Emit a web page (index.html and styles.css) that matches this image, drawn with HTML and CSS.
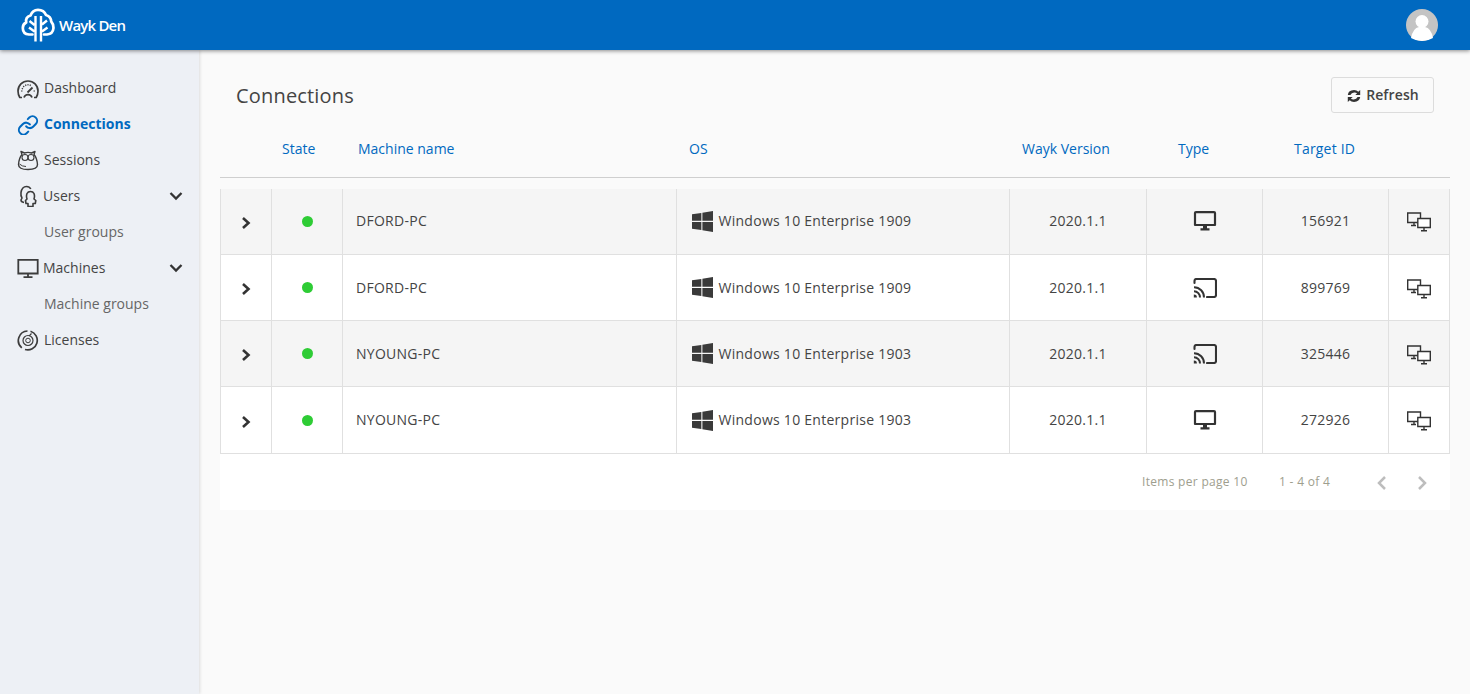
FILE: index.html
```html
<!DOCTYPE html>
<html lang="en">
<head>
<meta charset="utf-8">
<title>Wayk Den</title>
<link rel="stylesheet" href="styles.css">
</head>
<body>
<svg class="defs" width="0" height="0" aria-hidden="true">
  <defs>
    <symbol id="i-win" viewBox="0 0 20 20"><path d="M0 3.1 8.9 1.8V9.4H0ZM9.900 1.600 20 0V9.400H9.900ZM0 10.400H8.900V18.200L0 16.900ZM9.900 10.400H20V20L9.900 18.400Z"/></symbol>
    <symbol id="i-mon" viewBox="0 0 24 22"><path fill="none" stroke="currentColor" stroke-width="2.200" d="M3 2.100H21Q22 2.100 22 3.100V15H2V3.100Q2 2.100 3 2.100Z" stroke-linejoin="round"/><path d="M10 16H14V18.200H16.500V20.500H7.500V18.200H10Z"/></symbol>
    <symbol id="i-cast" viewBox="0 0 24 20"><path fill="none" stroke="currentColor" stroke-width="2.100" stroke-linecap="round" d="M1.500 5V3Q1.500 1 3.500 1H21Q23 1 23 3V17Q23 19 21 19H14"/><path fill="none" stroke="currentColor" stroke-width="2" d="M1 9.200A10 10 0 0 1 11 19.500M1 13.300A6 6 0 0 1 7 19.500"/><path d="M.8 16.400A3 3 0 0 1 3.900 19.500H.8Z"/></symbol>
    <symbol id="i-rc" viewBox="0 0 24 20"><g fill="none" stroke="currentColor" stroke-width="1.400"><path d="M.7 1H13.500V10.500H.7ZM7 10.500V13.500M4 13.500H9"/><path class="rc-front" d="M10.800 6.500H23.300V15.500H10.800ZM17 15.500V18.800M14 18.800H20"/></g></symbol>
    <symbol id="i-chev" viewBox="0 0 10 14"><path fill="none" stroke="currentColor" stroke-width="2.600" d="M2 3 7.500 8 2 13"/></symbol>
  </defs>
</svg>

<header class="topbar">
  <div class="brand">
    <svg class="logo" viewBox="0 0 34 34" aria-hidden="true">
      <path fill="none" stroke="#fff" stroke-width="2.700" stroke-linejoin="round" stroke-linecap="round" d="M11.500 26.500H8Q1.800 26 1.800 20Q1.800 16 5.200 14.500Q4.200 9 9.500 7.500Q11.500 1.800 17 1.800Q23 1.800 25 7Q30 8.500 30.200 13.500Q32.500 16 32.500 20Q32 26 26 26.500H23"/>
      <path fill="none" stroke="#fff" stroke-width="2.400" d="M14.500 8V33.500M20 8V33.500M8.500 13 13.500 17M8 19.500 13.500 23.500M26 12.500 21 16.500M26.500 19.500 21 23.500"/>
    </svg>
    <span class="brand-name">Wayk Den</span>
  </div>
  <div class="avatar">
    <svg viewBox="0 0 32 32" width="32" height="32" aria-hidden="true">
      <circle cx="16" cy="16" r="16" fill="#c4c4c4"/>
      <circle cx="16" cy="12.500" r="6.500" fill="#fff"/>
      <path d="M5 29Q7 19 13 18H19Q25 19 27 29Q22 32 16 32Q10 32 5 29Z" fill="#fff"/>
    </svg>
  </div>
</header>

<div class="shell">
  <nav class="sidebar">
    <a class="nav-item"><svg class="nav-icon" viewBox="0 0 22 22" aria-hidden="true"><g fill="none" stroke="#3c3c3c" stroke-width="1.700"><path d="M5 20.500H2.800Q1 17.500 1 14A10 10 0 0 1 21 14Q21 17.500 19.200 20.500H17M7 20.500A4.200 4.200 0 0 1 15 20.500"/><path d="M10.500 15.500 15.500 10.500" stroke-width="1.800"/><path d="M4 14H5.500M16.500 14H18M11 7V8.500M6.200 9 7.200 10M8.500 7.500 9 9M13.500 7.500 13 9M4.800 11.300 6 12" stroke-width="1.100"/></g></svg><span>Dashboard</span></a>
    <a class="nav-item active"><svg class="nav-icon" viewBox="0 -1.500 24 24" aria-hidden="true"><g fill="none" stroke="#0069c0" stroke-width="2.200" stroke-linecap="round"><path d="M10 13a5 5 0 0 0 7.540.54l3-3a5 5 0 0 0-7.070-7.070l-1.720 1.710"/><path d="M14 11a5 5 0 0 0-7.540-.54l-3 3a5 5 0 0 0 7.070 7.070l1.710-1.710"/></g></svg><span>Connections</span></a>
    <a class="nav-item"><svg class="nav-icon" viewBox="0 0 22 22" aria-hidden="true"><g fill="none" stroke="#3c3c3c" stroke-width="1.400" stroke-linejoin="round"><path d="M5 5.500 4 2.500 7.500 4Q11 2.800 14.500 4L18 2.500 17 5.500Q20 9 20.500 15.500Q20.500 20.500 11 20.500T1.500 15.500Q2 9 5 5.500Z"/><circle cx="8" cy="8.500" r="3" stroke-width="1.100"/><circle cx="14" cy="8.500" r="3" stroke-width="1.100"/><path d="M2.500 15Q5 17.500 9 17.500" stroke-width="1"/></g></svg><span>Sessions</span></a>
    <a class="nav-item group tight"><svg class="nav-icon" viewBox="0 0 22 22" aria-hidden="true"><g fill="none" stroke="#3c3c3c" stroke-width="1.600" stroke-linejoin="round"><path d="M7 17.500Q4 17 4 15L5 13Q3.500 11 4 7.500Q5 1.500 9.500 1.500Q12.500 1.500 13.800 4"/><path d="M11 21.500V18.500H9L8.500 15.500 10 14Q9 11 10 8.500Q11 6.500 13.500 6.500T17 8.500Q18 11 17 14L18.800 15.500 18.300 18.500H16V21.500Z"/></g></svg><span>Users</span><svg class="nav-chev" viewBox="0 0 14 10" aria-hidden="true"><path fill="none" stroke="#333" stroke-width="2.300" d="M1.500 2 7 7.500 12.500 2"/></svg></a>
    <a class="nav-item sub"><span>User groups</span></a>
    <a class="nav-item group tight"><svg class="nav-icon" viewBox="0 0 22 22" aria-hidden="true"><path fill="none" stroke="#3c3c3c" stroke-width="1.800" d="M1.300 2.900H20.700V16.500H1.300ZM11 16.500V20.200M6.500 20.200H15.500"/></svg><span>Machines</span><svg class="nav-chev" viewBox="0 0 14 10" aria-hidden="true"><path fill="none" stroke="#333" stroke-width="2.300" d="M1.500 2 7 7.500 12.500 2"/></svg></a>
    <a class="nav-item sub"><span>Machine groups</span></a>
    <a class="nav-item"><svg class="nav-icon" viewBox="0 0 22 22" aria-hidden="true"><g fill="none" stroke="#3c3c3c"><path stroke-width="1.700" d="M13.500 2.300A9.500 9.500 0 0 1 8 20.500M4.800 18.800A9.500 9.500 0 0 1 10.500 2"/><path stroke-width="1.200" d="M14.500 4.500 12 7.200"/><circle cx="11" cy="11.500" r="5" stroke-width="1.200"/><circle cx="11" cy="11.500" r="2.300" stroke-width="1"/></g></svg><span>Licenses</span></a>
  </nav>

  <main class="content">
    <div class="title-row">
      <h1 class="title">Connections</h1>
      <button class="refresh" type="button">
        <svg class="refresh-icon" viewBox="0 0 14 14" aria-hidden="true"><path fill="#333" d="M.8 6Q1.400 1.300 7 1.100Q9.800 1.100 11.300 2.800L13.200 1V6H8.300L10.100 4.300Q9 3.400 7.200 3.500Q4.500 3.600 3.400 6ZM13.200 8Q12.600 12.700 7 12.900Q4.200 12.900 2.700 11.200L.8 13V8H5.700L3.900 9.700Q5 10.600 6.800 10.500Q9.500 10.400 10.600 8Z"/></svg>
        <span>Refresh</span>
      </button>
    </div>

    <div class="grid-row head">
      <div></div>
      <div class="h-state">State</div>
      <div class="h-name">Machine name</div>
      <div class="h-os">OS</div>
      <div class="h-ver">Wayk Version</div>
      <div class="h-type">Type</div>
      <div class="h-id">Target ID</div>
      <div></div>
    </div>

    <div class="table">
      <div class="grid-row row odd">
        <div class="cell center"><svg class="chev" aria-hidden="true"><use href="#i-chev"/></svg></div>
        <div class="cell center"><span class="dot"></span></div>
        <div class="cell">DFORD-PC</div>
        <div class="cell os"><svg class="win" aria-hidden="true"><use href="#i-win"/></svg>Windows 10 Enterprise 1909</div>
        <div class="cell center">2020.1.1</div>
        <div class="cell center"><svg class="type-mon" aria-hidden="true"><use href="#i-mon"/></svg></div>
        <div class="cell center">156921</div>
        <div class="cell center"><svg class="rc" aria-hidden="true"><use href="#i-rc"/></svg></div>
      </div>
      <div class="grid-row row">
        <div class="cell center"><svg class="chev" aria-hidden="true"><use href="#i-chev"/></svg></div>
        <div class="cell center"><span class="dot"></span></div>
        <div class="cell">DFORD-PC</div>
        <div class="cell os"><svg class="win" aria-hidden="true"><use href="#i-win"/></svg>Windows 10 Enterprise 1909</div>
        <div class="cell center">2020.1.1</div>
        <div class="cell center"><svg class="type-cast" aria-hidden="true"><use href="#i-cast"/></svg></div>
        <div class="cell center">899769</div>
        <div class="cell center"><svg class="rc" aria-hidden="true"><use href="#i-rc"/></svg></div>
      </div>
      <div class="grid-row row odd">
        <div class="cell center"><svg class="chev" aria-hidden="true"><use href="#i-chev"/></svg></div>
        <div class="cell center"><span class="dot"></span></div>
        <div class="cell">NYOUNG-PC</div>
        <div class="cell os"><svg class="win" aria-hidden="true"><use href="#i-win"/></svg>Windows 10 Enterprise 1903</div>
        <div class="cell center">2020.1.1</div>
        <div class="cell center"><svg class="type-cast" aria-hidden="true"><use href="#i-cast"/></svg></div>
        <div class="cell center">325446</div>
        <div class="cell center"><svg class="rc" aria-hidden="true"><use href="#i-rc"/></svg></div>
      </div>
      <div class="grid-row row">
        <div class="cell center"><svg class="chev" aria-hidden="true"><use href="#i-chev"/></svg></div>
        <div class="cell center"><span class="dot"></span></div>
        <div class="cell">NYOUNG-PC</div>
        <div class="cell os"><svg class="win" aria-hidden="true"><use href="#i-win"/></svg>Windows 10 Enterprise 1903</div>
        <div class="cell center">2020.1.1</div>
        <div class="cell center"><svg class="type-mon" aria-hidden="true"><use href="#i-mon"/></svg></div>
        <div class="cell center">272926</div>
        <div class="cell center"><svg class="rc" aria-hidden="true"><use href="#i-rc"/></svg></div>
      </div>
    </div>

    <div class="pager">
      <span class="per-page">Items per page 10</span>
      <span class="range">1 - 4 of 4</span>
      <svg class="pg" viewBox="0 0 14 18" aria-hidden="true"><path fill="none" stroke="#bdbdbd" stroke-width="2.500" d="M10 3 4 9 10 15"/></svg>
      <svg class="pg next" viewBox="0 0 14 18" aria-hidden="true"><path fill="none" stroke="#bdbdbd" stroke-width="2.500" d="M4 3 10 9 4 15"/></svg>
    </div>
  </main>
</div>
</body>
</html>
```

FILE: styles.css
```css
* { box-sizing: border-box; }
html, body { height: 100%; }
body {
  margin: 0;
  font-family: "Open Sans", "Liberation Sans", sans-serif;
  font-size: 14px;
  line-height: 20px;
  color: #444;
  background: #fafafa;
  overflow: hidden;
}
.defs { display: block; height: 0; }

.topbar {
  position: relative;
  z-index: 3;
  height: 50px;
  background: #0069c0;
  box-shadow: 0 1px 4px rgba(0, 0, 0, .45);
  display: flex;
  align-items: center;
  justify-content: space-between;
  padding: 0 32px 0 21px;
}
.brand { display: flex; align-items: center; gap: 4px; }
.logo { display: block; width: 34px; height: 34px; }
.brand-name { color: #fff; font-size: 15px; font-weight: 600; letter-spacing: -.8px; }
.avatar { display: flex; }

.shell { display: flex; height: 644px; }
.sidebar {
  position: relative;
  z-index: 2;
  width: 199px;
  flex: none;
  background: #edf0f5;
  box-shadow: 1px 0 3px rgba(0, 0, 0, .12);
  padding: 20px 0 0 17px;
  color: #444;
}
.nav-item {
  display: flex;
  align-items: center;
  height: 36px;
  gap: 5px;
}
.nav-item.tight { gap: 4px; }
.nav-icon { width: 22px; height: 22px; flex: none; }
.nav-item.active { color: #0069c0; font-weight: 700; }
.nav-item.sub { padding-left: 27px; color: #666; }
.nav-chev { width: 14px; height: 10px; margin-left: auto; margin-right: 16px; }

.content { flex: 1; padding: 27px 20px 0 21px; min-width: 0; }
.title-row {
  display: flex;
  align-items: center;
  justify-content: space-between;
  height: 36px;
  padding: 0 16px;
}
.title {
  margin: 0;
  padding-top: 2px;
  font-size: 20px;
  line-height: 36px;
  font-weight: 400;
  letter-spacing: .18px;
  color: #444;
}
.refresh {
  width: 103px;
  height: 36px;
  display: flex;
  align-items: center;
  justify-content: center;
  gap: 5px;
  background: #fafafa;
  border: 1px solid #dcdcdc;
  border-radius: 3px;
  font: 600 14px/20px "Open Sans", "Liberation Sans", sans-serif;
  letter-spacing: .12px;
  color: #444;
  padding: 0 0 0 1px;
}
.refresh-icon { width: 14px; height: 14px; margin-top: 2px; }

.grid-row {
  display: grid;
  grid-template-columns: 51px 71px 334px 333px 137px 116px 126px 62px;
}
.head {
  margin-top: 18px;
  height: 47px;
  padding-top: 8px;
  border-bottom: 1px solid #cfcfcf;
  color: #0069c0;
}
.h-state { padding-left: 11px; }
.h-name { padding-left: 16px; }
.h-os, .h-ver { padding-left: 13px; }
.h-type, .h-id { padding-left: 32px; }
.h-id { letter-spacing: .2px; }

.table { margin-top: 10.5px; border-left: 1px solid #e0e0e0; }
.row {
  grid-template-columns: 51px 71px 334px 333px 137px 116px 126px 61px;
  height: 66.25px;
  background: #fff;
  border-bottom: 1px solid #e0e0e0;
}
.row.odd { background: #f5f5f5; }
.cell {
  display: flex;
  align-items: center;
  padding: .4px 0 0 13px;
  border-right: 1px solid #e0e0e0;
  color: #444;
  letter-spacing: .27px;
}
.cell.center { justify-content: center; padding-left: 0; }
.cell.os { padding-left: 14.5px; }
.chev { width: 10px; height: 14px; color: #333; margin-top: 1px; overflow: visible; }
.dot { width: 11px; height: 11px; border-radius: 50%; background: #2ecc35; }
.win { width: 21px; height: 21px; fill: #3a3a3a; margin-right: 6px; flex: none; }
.type-mon { width: 24px; height: 22px; fill: #333; color: #333; }
.type-cast { width: 24px; height: 20px; fill: #333; color: #333; margin-top: 1px; }
.rc { width: 24px; height: 20px; color: #333; margin: 2px 0 0 0; }
.rc-front { fill: #fff; }
.odd .rc-front { fill: #f5f5f5; }

.pager {
  height: 56.5px;
  background: #fff;
  display: flex;
  align-items: center;
  padding-left: 922px;
  font-size: 12px;
  letter-spacing: .3px;
  color: #9e9e8e;
}
.per-page { width: 137px; }
.range { width: 96px; }
.pg { width: 14px; height: 18px; margin-top: 2px; }
.pg.next { margin-left: 26px; }
```
